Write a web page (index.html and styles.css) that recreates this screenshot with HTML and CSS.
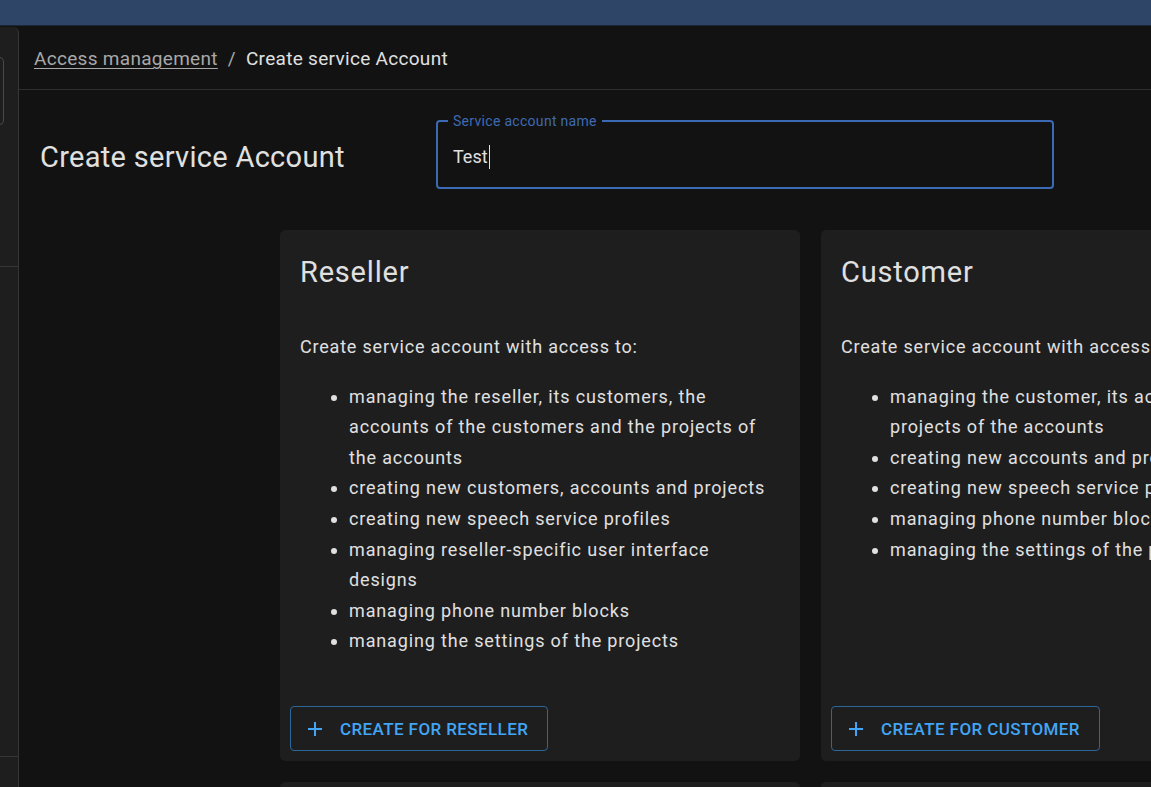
FILE: index.html
```html
<!DOCTYPE html>
<html lang="en">
<head>
<meta charset="utf-8">
<title>Create service Account</title>
<link rel="stylesheet" href="styles.css">
</head>
<body>
<div class="topbar"></div>
<div class="layout">
  <aside class="sidebar">
    <div class="side-top">
      <div class="side-box"></div>
    </div>
    <div class="side-mid"></div>
    <div class="side-bottom"></div>
  </aside>
  <main class="main">
    <nav class="breadcrumb">
      <a class="crumb-link" href="#">Access management</a>
      <span class="crumb-sep">/</span>
      <span class="crumb-current">Create service Account</span>
    </nav>
    <section class="head">
      <h1 class="page-title">Create service Account</h1>
      <fieldset class="field">
        <legend class="field-label">Service account name</legend>
        <div class="field-input">Test<span class="caret"></span></div>
      </fieldset>
    </section>
    <section class="cards">
      <article class="card">
        <h2 class="card-title">Reseller</h2>
        <p class="card-text">Create service account with access to:</p>
        <ul class="card-list">
          <li>managing the reseller, its customers, the accounts of the customers and the projects of the accounts</li>
          <li>creating new customers, accounts and projects</li>
          <li>creating new speech service profiles</li>
          <li>managing reseller-specific user interface designs</li>
          <li>managing phone number blocks</li>
          <li>managing the settings of the projects</li>
        </ul>
        <div class="card-actions">
          <button class="btn" type="button">
            <svg class="btn-icon" viewBox="0 0 14 14" width="14" height="14"><path d="M7 0v14M0 7h14" stroke="currentColor" stroke-width="2" fill="none"/></svg>
            <span>Create for reseller</span>
          </button>
        </div>
      </article>
      <article class="card">
        <h2 class="card-title">Customer</h2>
        <p class="card-text">Create service account with access to:</p>
        <ul class="card-list">
          <li>managing the customer, its accounts and the projects of the accounts</li>
          <li>creating new accounts and projects</li>
          <li>creating new speech service profiles</li>
          <li>managing phone number blocks</li>
          <li>managing the settings of the projects</li>
        </ul>
        <div class="card-actions">
          <button class="btn" type="button">
            <svg class="btn-icon" viewBox="0 0 14 14" width="14" height="14"><path d="M7 0v14M0 7h14" stroke="currentColor" stroke-width="2" fill="none"/></svg>
            <span>Create for customer</span>
          </button>
        </div>
      </article>
      <article class="card"></article>
      <article class="card"></article>
      <article class="card"></article>
    </section>
  </main>
</div>
</body>
</html>
```
FILE: styles.css
```css
* { box-sizing: border-box; }
html, body { height: 100%; }
body {
  margin: 0;
  background: #121212;
  color: #e0e0e0;
  font-family: Roboto, "Liberation Sans", sans-serif;
  overflow: hidden;
}
.topbar {
  height: 26px;
  background: #2f4567;
  border-bottom: 1px solid #1b2638;
}
.layout {
  display: flex;
  height: calc(100% - 26px);
}
.sidebar {
  width: 19px;
  flex: none;
  margin-top: 1px;
  background: #1e1e1e;
  border-right: 1px solid #363636;
  border-top-right-radius: 6px;
  display: flex;
  flex-direction: column;
}
.side-top {
  height: 240px;
  padding-top: 30px;
  border-bottom: 1px solid #363636;
}
.side-box {
  width: 8px;
  height: 68px;
  margin-left: -4px;
  border: 1px solid #4a4a4a;
  border-left: none;
  border-radius: 0 5px 5px 0;
}
.side-mid {
  height: 490px;
  border-bottom: 1px solid #363636;
}
.side-bottom { flex: 1; }
.main {
  flex: 1;
  min-width: 0;
  overflow: hidden;
}
.breadcrumb {
  height: 64px;
  border-bottom: 1px solid #2e2e2e;
  display: flex;
  align-items: center;
  padding: 2px 0 0 15px;
  font-size: 19px;
  letter-spacing: 0.3px;
  gap: 10px;
}
.crumb-link {
  color: #a8a8a8;
  text-decoration: underline;
  text-underline-offset: 3px;
  text-decoration-thickness: 1px;
}
.crumb-sep { color: #a8a8a8; }
.crumb-current { color: #e0e0e0; }
.head {
  display: flex;
  align-items: flex-start;
  padding: 24px 0 0 21px;
  height: 140px;
}
.page-title {
  width: 396px;
  flex: none;
  margin: 0;
  padding-top: 23px;
  font-size: 29px;
  font-weight: 400;
  line-height: 40px;
  color: #e0e0e0;
  letter-spacing: 0.3px;
}
.field {
  width: 618px;
  height: 75px;
  margin: 0;
  padding: 0 15px;
  border: 2px solid #3b69b3;
  border-radius: 4px;
}
.field-label {
  padding: 0 5px;
  margin-left: -5px;
  font-size: 14px;
  line-height: 14px;
  color: #3e6ab2;
  letter-spacing: 0.3px;
}
.field-input {
  font-size: 18px;
  line-height: 30px;
  padding-top: 14px;
  color: #e0e0e0;
  display: flex;
  align-items: center;
}
.caret {
  display: inline-block;
  width: 1px;
  height: 24px;
  background: #e0e0e0;
  margin-left: 1px;
}
.cards {
  display: grid;
  grid-template-columns: repeat(3, 520px);
  grid-auto-rows: 531px;
  gap: 21px;
  margin-left: 261px;
}
.card {
  background: #1e1e1e;
  border-radius: 5px;
  display: flex;
  flex-direction: column;
  padding: 20px 0 0;
}
.card-title {
  margin: 0;
  padding: 0 20px;
  font-size: 29px;
  font-weight: 400;
  line-height: 45px;
  color: #e0e0e0;
  letter-spacing: 0.8px;
}
.card-text {
  margin: 37px 0 0;
  padding: 0 20px;
  font-size: 18px;
  line-height: 30.6px;
  color: #e0e0e0;
  letter-spacing: 0.8px;
  white-space: nowrap;
}
.card-list {
  margin: 19px 0 0;
  padding: 0 26px 0 69px;
  font-size: 18px;
  line-height: 30.6px;
  color: #e0e0e0;
  letter-spacing: 0.85px;
}
.card-actions {
  margin-top: auto;
  padding: 10px;
}
.btn {
  display: inline-flex;
  align-items: center;
  gap: 18px;
  height: 45px;
  padding: 0 19px 0 17px;
  background: transparent;
  border: 1px solid #2d6799;
  border-radius: 4px;
  color: #42a5f5;
  font-family: inherit;
  font-size: 17px;
  font-weight: 500;
  text-transform: uppercase;
  letter-spacing: 0.4px;
  cursor: pointer;
}
.btn-icon { display: block; }
```
